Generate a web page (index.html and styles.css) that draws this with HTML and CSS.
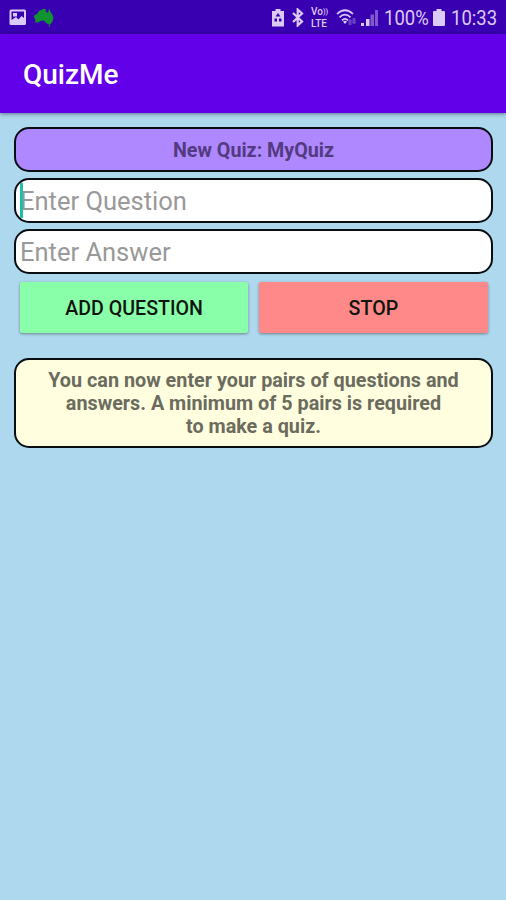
FILE: index.html
```html
<!DOCTYPE html>
<html lang="en">
<head>
<meta charset="utf-8">
<title>QuizMe</title>
<link rel="stylesheet" href="styles.css">
</head>
<body>
<div class="status">
  <svg class="photo" width="18" height="17" viewBox="0 0 18 17"><path fill="#dccbf7" fill-rule="evenodd" d="M2 0.5h13.500q1.500 0 1.500 1.500v12.500q0 1.500-1.500 1.500H2q-1.500 0-1.500-1.500V2Q.5.500 2 .5zM2.500 2.500v8.500l4.500-3 2.500 2.500 3-3.500 2.500 2V2.500zM4 4h4v3.500H4z"/></svg>
  <svg class="map" width="21" height="20" viewBox="0 0 21 20"><path fill="#129332" d="M.5 8l4-2.500L6 3l3-1.500 2-.8 2 .5-.5 2L15 5l1-4.500 1.500 3.200L19.500 7l1 3-1 3.500-2.500 3.200-2.500-.7-2-2-2-1.500-3 .5-3 1.500H2l.5-2.500z"/><path fill="#129332" d="M15.300 17.500h2l-1 1.800z"/></svg>
  <div class="indicators">
    <svg width="12" height="18" viewBox="0 0 12 18"><path fill="#dccbf7" d="M3.500 0h5v2H12v15.500H0V2h3.500z"/><path fill="#3900b1" d="M6 4l2.500 3.500h-5zM2.500 9.500h2.500v3H2.500zM7 9.500h2.500v3H7z"/></svg>
    <svg class="bt" width="12" height="19" viewBox="0 0 12 19"><path fill="none" stroke="#dccbf7" stroke-width="2.200" d="M1 5l9 8.500-4.300 4V1.500L10 5.500l-9 8.500"/></svg>
    <div class="volte"><span>Vo<small>))</small></span><span class="lte">LTE</span></div>
    <svg class="wifi" width="21" height="17" viewBox="0 0 21 17"><g fill="none" stroke="#dccbf7" stroke-width="1.700"><path d="M1 5q8-7.500 16 0M3.500 8.300q5.500-5.500 11 0M6 11.300q3-3 6 0"/></g><path fill="#dccbf7" d="M7 12.500q2-1.500 4 0l-2 2.500z"/><path fill="#6a42c4" d="M11.500 12l2.500-2 2.500 2h-1v4h-3v-4zM16.500 9h3v4h1l-2.500 2.500-2.500-2.500h1z"/></svg>
    <svg class="signal" width="18" height="17" viewBox="0 0 18 17"><path fill="#dccbf7" d="M0 14h3v3H0zM5 10h3.500v7H5z"/><path fill="#8059ce" d="M9.500 5.500H13V17H9.500zM14 1h3v16h-3z"/></svg>
    <span class="percent">100%</span>
    <svg class="battery" width="12" height="18" viewBox="0 0 12 18"><path fill="#dccbf7" d="M3.500 0h5v2H11q1 0 1 1v13q0 1-1 1H1q-1 0-1-1V3q0-1 1-1h2.500z"/></svg>
    <span class="time">10:33</span>
  </div>
</div>
<header class="appbar">QuizMe</header>
<main>
  <div class="box quiz">New Quiz: MyQuiz</div>
  <div class="box field"><span>Enter Question</span><i class="caret"></i></div>
  <div class="box field answer"><span>Enter Answer</span></div>
  <div class="actions">
    <button class="add">ADD QUESTION</button>
    <button class="stop">STOP</button>
  </div>
  <div class="box info">You can now enter your pairs of questions and<br>answers. A minimum of 5 pairs is required<br>to make a quiz.</div>
</main>
</body>
</html>
```
FILE: styles.css
```css
* { box-sizing: border-box; }
body {
  margin: 0;
  min-height: 900px;
  background: #aed8ed;
  font-family: Roboto, sans-serif;
}
.status {
  height: 34px;
  display: flex;
  align-items: flex-start;
  background: #3900b1;
  color: #dccbf7;
}
.status svg { flex: none; }
.photo { margin: 9px 0 0 9px; }
.map { margin: 8px 0 0 6px; }
.indicators {
  display: flex;
  margin-left: 218px;
  padding-top: 9px;
}
.bt { margin-left: 8px; margin-top: -1px; }
.volte {
  width: 18px;
  margin: -3px 0 0 7px;
  font-size: 10.5px;
  font-weight: 500;
  line-height: 11px;
}
.volte span {
  display: block;
  width: 18px;
  height: 11px;
  white-space: nowrap;
  transform: scaleX(.95);
  transform-origin: left;
}
.volte small {
  font-size: 8px;
  line-height: 1;
  vertical-align: 1px;
}
.volte .lte { height: 12px; line-height: 13px; }
.wifi { margin-left: 7px; }
.signal { margin-left: 4px; }
.percent, .time {
  font-size: 21px;
  line-height: 24px;
  margin-top: -3px;
  transform: scaleX(.88);
  transform-origin: left;
  white-space: nowrap;
}
.percent { width: 44px; margin-left: 5px; }
.time { width: 46px; margin-left: 6px; }
.battery { margin-left: 5px; }
.appbar {
  position: relative;
  height: 79px;
  padding: 0 23px;
  background: #6200ea;
  color: #fff;
  font-size: 28px;
  font-weight: 500;
  line-height: 82px;
  box-shadow: 0 1px 4px rgba(0, 0, 0, .45);
}
main { padding: 14px 13px 0 14px; }
.box {
  border: 2.500px solid #080d12;
  border-radius: 15px;
}
.quiz {
  height: 45px;
  background: #af87ff;
  color: #523b7f;
  font-size: 19.7px;
  font-weight: 700;
  line-height: 43px;
  text-align: center;
}
.field {
  position: relative;
  height: 45px;
  margin-top: 6px;
  padding-left: 4px;
  background: #fff;
  color: #999;
  font-size: 25.500px;
  line-height: 42px;
}
.field.answer { margin-top: 5.500px; }
.caret {
  position: absolute;
  left: 4px;
  top: 3px;
  width: 3px;
  height: 35px;
  background: #1fbfa5;
}
.actions {
  display: flex;
  gap: 11px;
  margin: 8.500px 5.500px 25px 6px;
}
button {
  flex: 1;
  height: 51px;
  border: 0;
  border-radius: 2px;
  padding: 2px 0 0;
  font: 500 19.6px/49px Roboto, sans-serif;
  color: #10140f;
  box-shadow: 0 1px 3px rgba(0, 0, 0, .4);
}
.add { background: #89ffa9; }
.stop { background: #ff8988; }
.info {
  height: 90px;
  padding-top: 9px;
  background: #ffffe0;
  color: #6b6b5e;
  font-size: 19.8px;
  font-weight: 700;
  line-height: 23px;
  text-align: center;
}
```
